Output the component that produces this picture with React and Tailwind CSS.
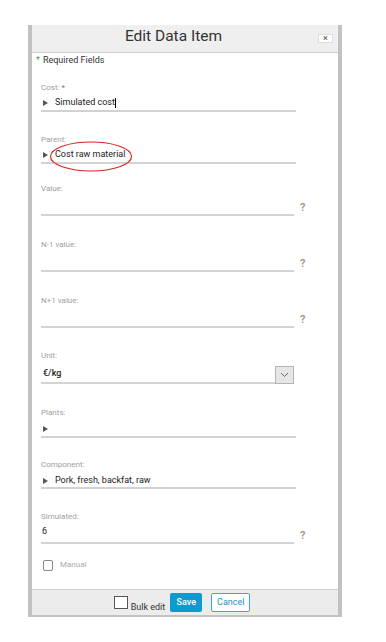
import React from "react";

function Tri() {
  return (
    <svg width="5" height="6" viewBox="0 0 5 6" className="ml-[2px] shrink-0">
      <polygon points="0,0 5,3 0,6" fill="#555" />
    </svg>
  );
}

function Label({ children, star }) {
  return (
    <div className="h-[10px] leading-[10px] text-[8px] text-[#a0a0a0]">
      {children}
      {star && <span className="text-[#3c9a6a] ml-[2px]">*</span>}
    </div>
  );
}

function Q() {
  return <span className="ml-[6px] pt-[4px] text-[11px] font-bold text-[#9a9a9a] leading-none">?</span>;
}

export default function App() {
  return (
    <div className="w-[386px] h-[642px] bg-white pt-[25px] pl-[28px] font-['Roboto',sans-serif] text-[#333]">
      <div className="w-[314px] h-[592px] border-x-4 border-b-2 border-[#c2c2c2] bg-white flex flex-col">
        {/* header */}
        <div className="h-[28px] shrink-0 bg-[#efefef] border-b border-[#cfcfcf] flex items-center">
          <div className="w-[283px] text-center text-[15.5px] leading-none text-[#333] pb-[3px]">Edit Data Item</div>
          <div className="ml-[3px] w-[15px] h-[9px] bg-white border border-[#dcdcdc] flex items-center justify-center text-[9px] leading-none text-[#444]">×</div>
        </div>

        {/* body */}
        <div className="relative flex-1 px-[9px]">
          <div className="mt-[2px] h-[10px] leading-[10px] text-[9px] -ml-[5px] text-[#333]">
            <span className="text-[#3c9a6a] mr-[3px]">*</span>Required Fields
          </div>

          {/* Cost */}
          <div className="mt-[18px]">
            <Label star>Cost:</Label>
            <div className="w-[255px] h-[19px] pt-[3px] flex items-center border-b-2 border-[#d2d2d2]">
              <Tri />
              <span className="ml-[7px] text-[9px] text-[#222]">Simulated cost</span>
              <span className="w-px h-[10px] bg-black"></span>
            </div>
          </div>

          {/* Parent */}
          <div className="mt-[23px]">
            <Label>Parent:</Label>
            <div className="w-[255px] h-[19px] pt-[3px] flex items-center border-b-2 border-[#d2d2d2]">
              <Tri />
              <span className="ml-[7px] text-[9px] text-[#222]">Cost raw material</span>
            </div>
          </div>

          {/* Value */}
          <div className="mt-[20px]">
            <Label>Value:</Label>
            <div className="flex items-center h-[22px]">
              <div className="w-[253px] h-[22px] border-b-2 border-[#d2d2d2]"></div>
              <Q />
            </div>
          </div>

          {/* N-1 */}
          <div className="mt-[24px]">
            <Label>N-1 value:</Label>
            <div className="flex items-center h-[22px]">
              <div className="w-[253px] h-[22px] border-b-2 border-[#d2d2d2]"></div>
              <Q />
            </div>
          </div>

          {/* N+1 */}
          <div className="mt-[24px]">
            <Label>N+1 value:</Label>
            <div className="flex items-center h-[22px]">
              <div className="w-[253px] h-[22px] border-b-2 border-[#d2d2d2]"></div>
              <Q />
            </div>
          </div>

          {/* Unit */}
          <div className="mt-[23px]">
            <Label>Unit:</Label>
            <div className="w-[253px] flex items-end">
              <div className="flex-1 h-[23px] pt-[4px] pl-[2px] flex items-center border-b-2 border-[#d2d2d2] text-[9px] font-medium text-[#222]">€/kg</div>
              <div className="w-[19px] h-[18px] border border-[#b4b4b4] bg-[#e6e6e6] flex items-center justify-center">
                <svg width="9" height="6" viewBox="0 0 9 6">
                  <polyline points="1,1 4.5,4.5 8,1" fill="none" stroke="#666" strokeWidth="1" />
                </svg>
              </div>
            </div>
          </div>

          {/* Plants */}
          <div className="mt-[24px]">
            <Label>Plants:</Label>
            <div className="w-[255px] h-[20px] pt-[3px] flex items-center border-b-2 border-[#d2d2d2]">
              <Tri />
            </div>
          </div>

          {/* Component */}
          <div className="mt-[22px]">
            <Label>Component:</Label>
            <div className="w-[255px] h-[19px] pt-[4px] flex items-center border-b-2 border-[#d2d2d2]">
              <Tri />
              <span className="ml-[7px] text-[9px] text-[#222]">Pork, fresh, backfat, raw</span>
            </div>
          </div>

          {/* Simulated */}
          <div className="mt-[23px]">
            <Label>Simulated:</Label>
            <div className="flex items-center h-[22px]">
              <div className="w-[253px] h-[22px] flex items-center pl-[1px] border-b-2 border-[#d2d2d2] text-[9px] text-[#222]">6</div>
              <Q />
            </div>
          </div>

          {/* Manual */}
          <div className="mt-[15px] flex items-center">
            <div className="ml-[2px] w-[10px] h-[11px] border border-[#888] rounded-[2px] bg-white"></div>
            <span className="ml-[7px] text-[8px] text-[#aaa]">Manual</span>
          </div>

          {/* annotation ellipse */}
          <svg className="absolute left-[17px] top-[88px]" width="84" height="31" viewBox="0 0 84 31">
            <ellipse cx="42" cy="15.5" rx="40.5" ry="14.5" fill="none" stroke="#e02020" strokeWidth="1.2" />
          </svg>
        </div>

        {/* footer */}
        <div className="h-[26px] shrink-0 bg-[#ececec] border-t border-[#cfcfcf] flex items-center justify-center pr-[6px]">
          <div className="w-[14px] h-[13px] border border-[#555] bg-white"></div>
          <span className="ml-[3px] self-end mb-[3px] text-[9px] leading-[10px] text-[#333]">Bulk edit</span>
          <div className="ml-[5px] w-[32px] h-[19px] bg-[#0c9ad0] rounded-[2px] flex items-center justify-center text-[9px] text-white font-medium">Save</div>
          <div className="ml-[9px] w-[39px] h-[19px] bg-white border border-[#3aa9d9] rounded-[2px] flex items-center justify-center text-[9px] text-[#2390c2]">Cancel</div>
        </div>
      </div>
    </div>
  );
}
